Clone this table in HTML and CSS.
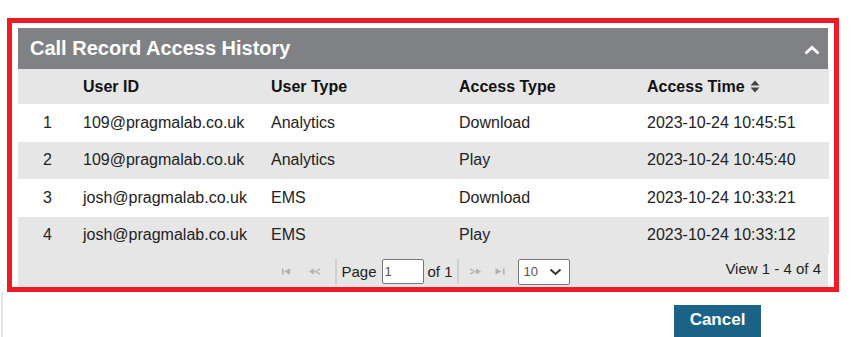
FILE: index.html
```html
<!DOCTYPE html>
<html>
<head>
<meta charset="utf-8">
<link rel="stylesheet" href="styles.css">
</head>
<body>
<div class="frame">
  <div class="panel">
    <div class="panel-head">
      <span class="panel-title">Call Record Access History</span>
      <svg class="collapse" width="16" height="10" viewBox="0 0 16 10"><polyline points="1.5,8.5 8,2.5 14.5,8.5" fill="none" stroke="#fff" stroke-width="3"/></svg>
    </div>
    <table class="grid">
      <colgroup><col class="c-num"><col class="c-w"><col class="c-w"><col class="c-w"><col class="c-w"></colgroup>
      <thead>
        <tr><th></th><th>User ID</th><th>User Type</th><th>Access Type</th><th>Access Time <svg class="sort" width="10" height="13" viewBox="0 0 10 13"><polygon points="5,0.5 9.5,5.5 0.5,5.5" fill="#444"/><polygon points="5,12.5 9.5,7.5 0.5,7.5" fill="#444"/></svg></th></tr>
      </thead>
      <tbody>
        <tr><td class="num">1</td><td>109@pragmalab.co.uk</td><td>Analytics</td><td>Download</td><td>2023-10-24 10:45:51</td></tr>
        <tr class="alt"><td class="num">2</td><td>109@pragmalab.co.uk</td><td>Analytics</td><td>Play</td><td>2023-10-24 10:45:40</td></tr>
        <tr><td class="num">3</td><td>josh@pragmalab.co.uk</td><td>EMS</td><td>Download</td><td>2023-10-24 10:33:21</td></tr>
        <tr class="alt"><td class="num">4</td><td>josh@pragmalab.co.uk</td><td>EMS</td><td>Play</td><td>2023-10-24 10:33:12</td></tr>
      </tbody>
    </table>
    <div class="pager">
      <div></div>
      <div class="pager-center">
        <svg class="pg-first" width="8" height="7" viewBox="0 0 8 7"><rect x="0" y="0.5" width="1.6" height="6" fill="#b0b0b0"/><polygon points="2.2,3.5 8,0.3 8,6.7" fill="#b0b0b0"/></svg>
        <svg class="pg-prev" width="11" height="7" viewBox="0 0 11 7"><polygon points="0,3.5 5,0.5 5,6.5" fill="#b0b0b0"/><polygon points="5,3.5 11,0.3 11,6.7" fill="#b0b0b0"/><polygon points="7.2,3.5 11,1.7 11,5.3" fill="#e6e6e6"/></svg>
        <span class="sep sep-l"></span>
        <span class="pg-text">Page</span>
        <span class="pg-input">1</span>
        <span class="pg-text">of 1</span>
        <span class="sep sep-r"></span>
        <svg class="pg-next" width="11" height="7" viewBox="0 0 11 7"><polygon points="11,3.5 6,0.5 6,6.5" fill="#b0b0b0"/><polygon points="6,3.5 0,0.3 0,6.7" fill="#b0b0b0"/><polygon points="3.8,3.5 0,1.7 0,5.3" fill="#e6e6e6"/></svg>
        <svg class="pg-last" width="10" height="7" viewBox="0 0 10 7"><polygon points="6.4,3.5 0.5,0.3 0.5,6.7" fill="#b0b0b0"/><rect x="8" y="0.5" width="1.6" height="6" fill="#b0b0b0"/></svg>
        <span class="pg-select">10<svg width="13" height="8" viewBox="0 0 13 8"><polyline points="1.5,1.5 6.5,6 11.5,1.5" fill="none" stroke="#333" stroke-width="2"/></svg></span>
      </div>
      <div class="pager-right">View 1 - 4 of 4</div>
    </div>
  </div>
</div>
<div class="footer">
  <button class="btn-cancel">Cancel</button>
</div>
</body>
</html>
```
FILE: styles.css
```css
html, body {
  margin: 0;
  padding: 0;
  background: #fff;
  font-family: Arial, "Liberation Sans", sans-serif;
  color: #222;
}
body {
  padding-top: 18px;
}
.frame {
  margin-left: 7px;
  border: 5px solid #ed1c24;
  padding: 5px 6px 0 6px;
  box-sizing: content-box;
  width: 810px;
}
.panel {
  width: 810px;
  background: #e6e6e6;
}
.panel-head {
  height: 41px;
  background: #808184;
  display: flex;
  align-items: center;
  justify-content: space-between;
  padding: 0 8px 0 12px;
}
.panel-title {
  color: #fff;
  font-weight: bold;
  font-size: 20px;
}
.collapse {
  margin-top: 2px;
}
.grid {
  width: 810px;
  border-collapse: collapse;
  table-layout: fixed;
  font-size: 16px;
}
.c-num { width: 59px; }
.c-w { width: 188px; }
.grid th {
  height: 35px;
  text-align: left;
  font-weight: bold;
  padding: 0 6px;
  background: #e6e6e6;
  color: #111;
}
.grid td {
  height: 37.5px;
  padding: 0 6px;
  background: #fff;
  white-space: nowrap;
}
.grid tr.alt td {
  background: #e6e6e6;
}
.grid td.num {
  text-align: center;
}
.sort {
  vertical-align: -1px;
  margin-left: 1px;
}
.pager {
  height: 33px;
  display: grid;
  grid-template-columns: 1fr auto 1fr;
  align-items: center;
  font-size: 15px;
}
.pager-center {
  display: flex;
  align-items: center;
  margin-top: 2px;
  margin-left: 6px;
}
.pg-prev { margin-left: 19px; }
.pg-next { margin-left: 11px; }
.pg-last { margin-left: 14px; }
.sep {
  width: 2px;
  height: 25px;
  background: #cfcfcf;
}
.sep-l { margin: 0 4px 0 15px; }
.sep-r { margin: 0 0 0 4px; }
.pg-text {
  color: #222;
}
.pg-input {
  width: 38px;
  height: 23px;
  border: 1px solid #767676;
  background: #fff;
  border-radius: 2px;
  margin: 0 4px 0 5px;
  font-size: 13px;
  color: #555;
  line-height: 23px;
  padding-left: 2px;
  box-sizing: content-box;
}
.pg-select {
  margin-left: 13px;
  height: 26px;
  border: 1px solid #767676;
  border-radius: 2px;
  background: #fff;
  font-size: 13px;
  color: #555;
  display: flex;
  align-items: center;
  justify-content: space-between;
  padding: 0 7px 0 5px;
  box-sizing: border-box;
  width: 52px;
}
.pager-right {
  text-align: right;
  padding-right: 7px;
  font-size: 15px;
  color: #222;
  margin-bottom: 4px;
}
.footer {
  margin-left: 1px;
  border-left: 2px solid #e3e3e3;
  height: 45px;
  display: flex;
  justify-content: flex-end;
  padding-right: 98px;
  padding-top: 13px;
  box-sizing: content-box;
}
.btn-cancel {
  width: 87px;
  height: 34px;
  background: #1b6386;
  color: #fff;
  border: none;
  font-family: Arial, "Liberation Sans", sans-serif;
  font-weight: bold;
  font-size: 17px;
  padding: 0;
  padding-bottom: 4px;
}
```
